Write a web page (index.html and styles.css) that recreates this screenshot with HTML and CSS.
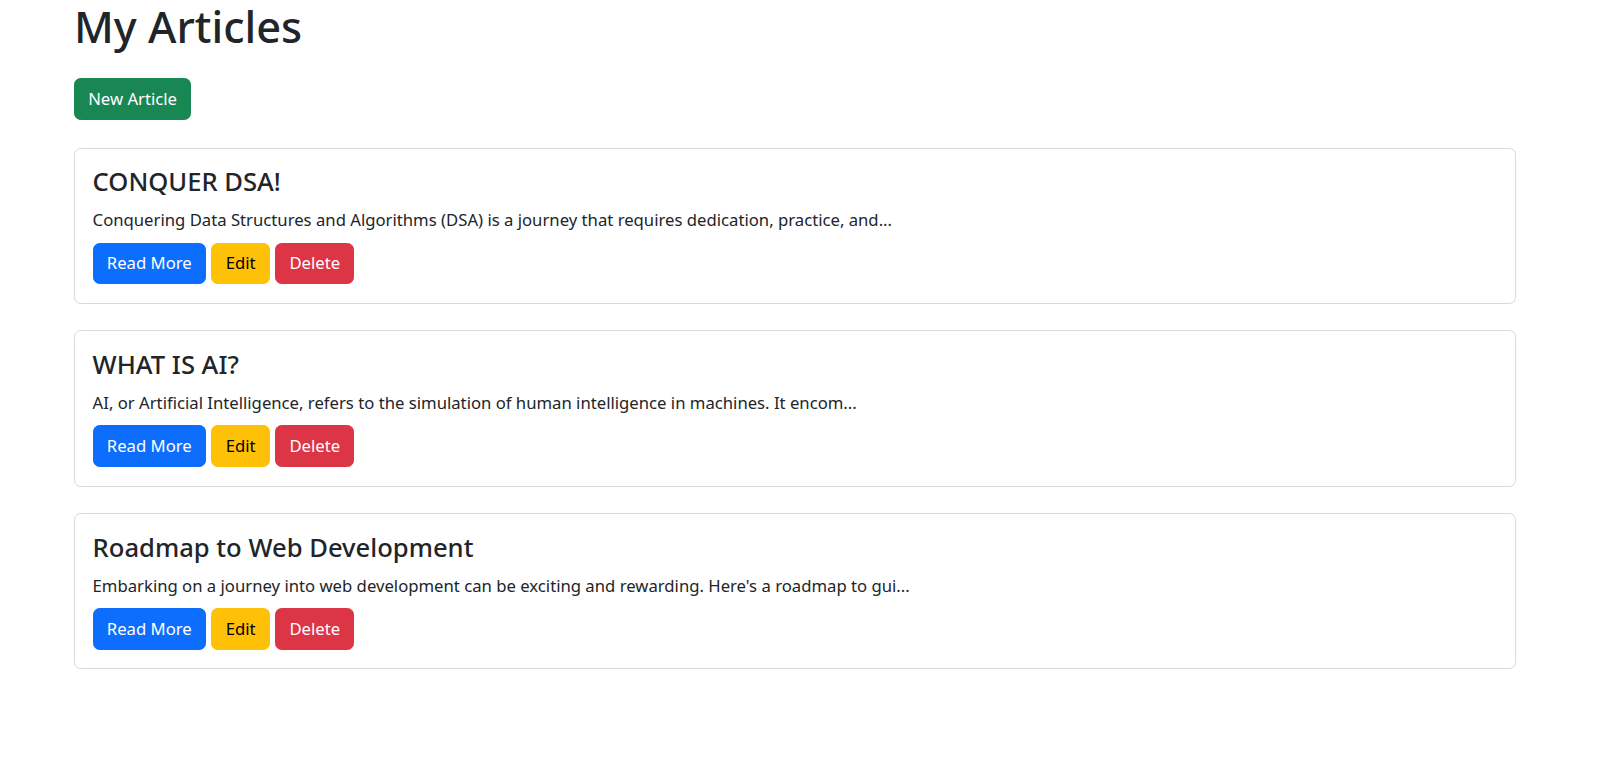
FILE: index.html
```html
<!DOCTYPE html>
<html lang="en">
<head>
<meta charset="utf-8">
<title>My Articles</title>
<link rel="stylesheet" href="styles.css">
</head>
<body>
<div class="container">
  <h1 class="page-title">My Articles</h1>
  <a class="btn btn-success new-btn" href="#">New Article</a>
  <div class="list">
    <div class="card">
      <h4 class="card-title">CONQUER DSA!</h4>
      <p class="card-text">Conquering Data Structures and Algorithms (DSA) is a journey that requires dedication, practice, and...</p>
      <div class="actions">
        <a class="btn btn-primary" href="#">Read More</a>
        <a class="btn btn-warning" href="#">Edit</a>
        <a class="btn btn-danger" href="#">Delete</a>
      </div>
    </div>
    <div class="card">
      <h4 class="card-title">WHAT IS AI?</h4>
      <p class="card-text">AI, or Artificial Intelligence, refers to the simulation of human intelligence in machines. It encom...</p>
      <div class="actions">
        <a class="btn btn-primary" href="#">Read More</a>
        <a class="btn btn-warning" href="#">Edit</a>
        <a class="btn btn-danger" href="#">Delete</a>
      </div>
    </div>
    <div class="card">
      <h4 class="card-title">Roadmap to Web Development</h4>
      <p class="card-text">Embarking on a journey into web development can be exciting and rewarding. Here's a roadmap to gui...</p>
      <div class="actions">
        <a class="btn btn-primary" href="#">Read More</a>
        <a class="btn btn-warning" href="#">Edit</a>
        <a class="btn btn-danger" href="#">Delete</a>
      </div>
    </div>
  </div>
</div>
</body>
</html>
```

FILE: styles.css
```css
* { box-sizing: border-box; }
html, body {
  margin: 0;
  padding: 0;
  background: #fff;
}
body {
  font-family: "Noto Sans", "Open Sans", sans-serif;
  font-size: 16.7px;
  line-height: 1.5;
  color: #212529;
}
.container {
  width: 1442px;
  margin-left: 74px;
  display: flex;
  flex-direction: column;
  align-items: flex-start;
}
.page-title {
  margin: 0;
  font-size: 43.4px;
  font-weight: 500;
  line-height: 53px;
}
.btn {
  display: inline-block;
  font-size: 16.7px;
  line-height: 26.4px;
  padding: 6.6px 13.2px;
  border: 1px solid transparent;
  border-radius: 6.6px;
  text-decoration: none;
  color: #fff;
  font-weight: 400;
}
.btn-success { background: #198754; border-color: #198754; }
.btn-primary { background: #0d6efd; border-color: #0d6efd; }
.btn-warning { background: #ffc107; border-color: #ffc107; color: #000; }
.btn-danger { background: #dc3545; border-color: #dc3545; }
.new-btn {
  margin-top: 25px;
}
.list {
  align-self: stretch;
  display: flex;
  flex-direction: column;
  gap: 26.5px;
  margin-top: 28px;
}
.card {
  border: 1px solid #d9d9d9;
  border-radius: 6.6px;
  padding: 17.6px 17.6px 18.6px;
  background: #fff;
}
.card-title {
  margin: 0 0 9px 0;
  font-size: 25.6px;
  font-weight: 500;
  line-height: 32px;
}
.card-text {
  margin: 0 0 9.5px 0;
  line-height: 26px;
}
.actions {
  display: flex;
  gap: 5.5px;
}
```
